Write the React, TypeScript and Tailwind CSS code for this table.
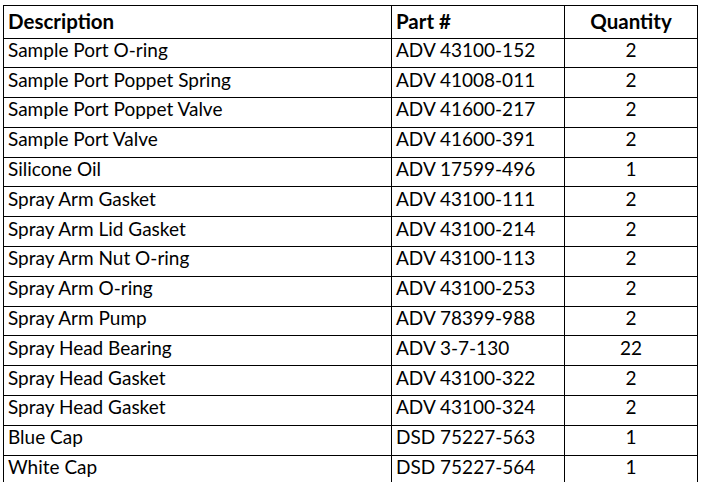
import React from "react";

const rows: [string, string, string][] = [
  ["Sample Port O-ring", "ADV 43100-152", "2"],
  ["Sample Port Poppet Spring", "ADV 41008-011", "2"],
  ["Sample Port Poppet Valve", "ADV 41600-217", "2"],
  ["Sample Port Valve", "ADV 41600-391", "2"],
  ["Silicone Oil", "ADV 17599-496", "1"],
  ["Spray Arm Gasket", "ADV 43100-111", "2"],
  ["Spray Arm Lid Gasket", "ADV 43100-214", "2"],
  ["Spray Arm Nut O-ring", "ADV 43100-113", "2"],
  ["Spray Arm O-ring", "ADV 43100-253", "2"],
  ["Spray Arm Pump", "ADV 78399-988", "2"],
  ["Spray Head Bearing", "ADV 3-7-130", "22"],
  ["Spray Head Gasket", "ADV 43100-322", "2"],
  ["Spray Head Gasket", "ADV 43100-324", "2"],
  ["Blue Cap", "DSD 75227-563", "1"],
  ["White Cap", "DSD 75227-564", "1"],
];

export default function App() {
  return (
    <div
      className="w-[702px] h-[482px] overflow-hidden bg-white text-black pt-[5px] pl-[3px]"
      style={{ fontFamily: "Lato, 'Open Sans', sans-serif" }}
    >
      <div className="w-[695px] border-t border-l border-black">
        <div className="grid grid-cols-[388px_173px_133px] h-[29.8px] text-[20.5px] font-bold">
          <div className="border-r border-b border-black pl-[4px] pb-[1px] flex items-center">Description</div>
          <div className="border-r border-b border-black pl-[4px] pb-[1px] flex items-center">Part #</div>
          <div className="border-r border-b border-black pb-[1px] flex items-center justify-center">Quantity</div>
        </div>
        {rows.map((r, i) => (
          <div key={i} className="grid grid-cols-[388px_173px_133px] h-[29.8px] text-[19px]">
            <div className="border-r border-b border-black pl-[4px] pb-[3px] flex items-center">{r[0]}</div>
            <div className="border-r border-b border-black pl-[4px] pb-[3px] flex items-center">{r[1]}</div>
            <div className="border-r border-b border-black pb-[3px] flex items-center justify-center">{r[2]}</div>
          </div>
        ))}
      </div>
    </div>
  );
}
